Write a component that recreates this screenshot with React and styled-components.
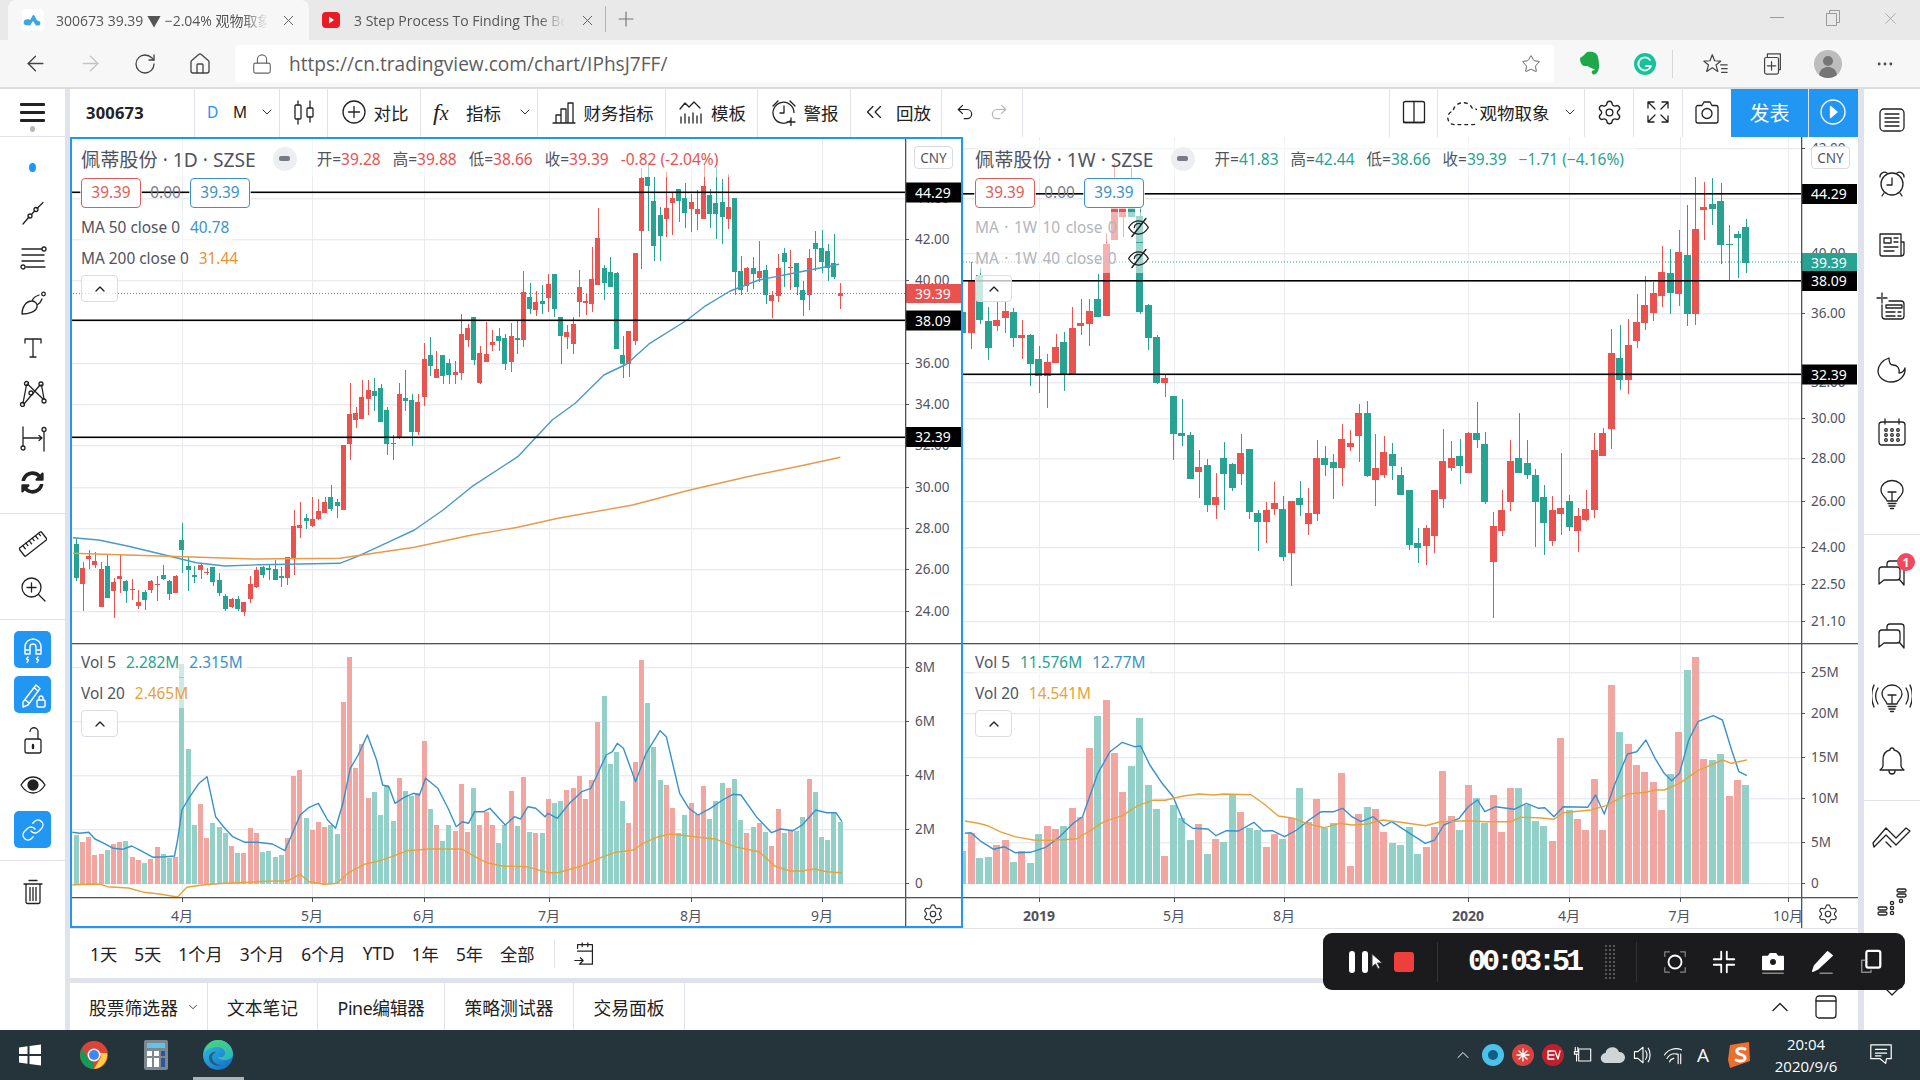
import React from 'react';
import styled, { createGlobalStyle } from 'styled-components';
import {
  ArrowLeft, ArrowRight, RotateCw, Home, Lock, Star, Plus, X, ChevronDown, ChevronUp,
  ChevronsLeft, Undo2, Redo2, Settings, Link as LinkIcon, MoreHorizontal,
} from 'lucide-react';
import { FaSyncAlt } from 'react-icons/fa';

const SANS = '"Noto Sans", "Noto Sans CJK SC", sans-serif';
const UI = '"Open Sans", "Noto Sans CJK SC", sans-serif';
const RED = '#e8524f';
const GREEN = '#28a292';
const PALE_RED = '#f2a6a2';
const PALE_GREEN = '#93d0c7';

const GlobalStyle = createGlobalStyle`
    html, body { margin: 0; padding: 0; background: #e0e3eb; }
    * { box-sizing: border-box; }
`;

// measured from the crops: [colour, body top, body bottom, wick top, wick bottom], y = base + v / 3
const left1 = [
    ['g',732,834,718,842],['r',804,852,785,933],['r',768,776,750,808],['r',784,795,755,804],['r',808,920,787,920],
    ['g',798,893,765,893],['r',846,872,835,953],['r',828,836,765,878],['g',843,872,840,908],['r',867,869,838,900],
    ['r',906,918,870,927],['g',876,899,870,930],['r',843,870,840,878],['r',852,854,828,902],['g',825,837,796,840],
    ['g',844,882,840,899],['r',828,878,826,880],['g',720,750,668,820],['g',798,809,770,872],['g',825,830,798,849],
    ['r',796,809,790,836],['r',817,819,805,826],['g',802,846,800,858],['g',840,878,820,888],['g',888,927,882,932],
    ['r',897,920,895,925],['g',897,927,888,934],['r',907,935,905,947],['r',852,896,828,908],['r',810,861,800,865],
    ['g',801,824,798,833],['g',804,809,795,840],['g',808,839,780,840],['g',828,833,800,860],['r',771,833,770,855],
    ['r',679,778,630,825],['r',675,685,606,713],['g',654,662,642,688],['r',657,678,590,680],['r',632,657,597,660],
    ['r',606,638,590,640],['g',591,627,555,633],['g',606,617,597,654],['r',435,630,435,630],['r',342,432,250,480],
    ['r',339,359,320,385],['r',291,357,241,357],['r',270,297,240,345],['g',273,288,234,333],['g',264,366,252,366],
    ['g',330,432,322,465],['g',430,431,405,480],['r',282,414,250,417],['g',294,303,210,333],['g',300,396,282,438],
    ['r',306,396,282,405],['r',177,291,128,318],['g',165,198,111,228],['r',207,234,153,234],['g',165,228,165,252],
    ['g',189,225,177,252],['r',216,225,183,252],['r',102,219,42,240],['r',84,120,72,141],['g',51,180,51,195],
    ['r',159,249,138,252],
];
const left2 = [
    ['r',583,605,486,605],['r',546,555,510,572],['g',528,543,504,573],['g',534,612,522,630],['r',528,606,488,636],
    ['g',534,540,482,582],['r',396,540,333,560],['g',411,447,368,462],['r',426,450,393,468],['g',423,432,375,462],
    ['r',372,414,342,456],['g',342,447,342,470],['g',471,528,471,612],['r',516,531,495,567],['r',492,552,471,582],
    ['r',381,426,330,472],['r',423,429,400,465],['r',357,432,261,456],['r',234,375,144,375],['g',324,369,315,420],
    ['g',336,381,291,381],['g',339,567,336,567],['g',585,612,528,654],['r',513,612,512,652],['r',279,543,278,555],
    ['r',54,213,24,327],['g',51,78,15,212],['g',123,258,52,303],['g',165,228,142,303],['r',144,177,36,231],
    ['r',114,129,96,225],['g',87,123,87,186],['g',114,159,69,204],['r',126,147,102,216],['r',147,162,90,210],
    ['r',78,177,15,177],['g',105,162,87,204],['g',129,162,20,238],['g',126,171,57,252],['r',141,177,42,207],
    ['g',114,336,114,405],['g',333,390,288,405],['r',324,378,320,395],['g',324,342,291,387],['r',333,354,243,366],
    ['g',330,405,315,432],['r',405,423,393,474],['r',324,408,282,426],['g',279,306,265,380],['r',321,323,270,390],
    ['g',309,381,309,405],['g',390,420,363,468],['r',294,405,267,450],['g',249,267,213,333],['g',264,306,210,339],
    ['g',273,324,252,363],['g',309,351,222,357],['r',400,407,369,447],
];
const right1 = [
    ['g',336,398,336,398],['r',244,398,185,447],['g',225,360,204,372],['g',363,444,320,480],['r',360,378,305,392],
    ['r',333,354,305,400],['g',336,414,324,441],['r',405,414,360,477],['g',405,492,402,558],['g',477,528,438,579],
    ['r',486,528,462,624],['r',441,489,402,489],['g',426,525,396,573],['r',384,525,321,525],['r',369,378,297,405],
    ['r',333,372,297,438],['g',297,350,222,350],['r',132,348,100,348],['r',-30,120,-111,120],['r',-20,50,-60,110],
    ['g',-20,50,-96,50],['g',48,336,20,341],['g',315,414,312,450],['g',411,549,405,552],['r',534,549,522,591],
    ['g',588,702,588,780],['g',699,708,597,738],['g',705,837,696,837],['r',801,816,750,894],['g',795,915,777,936],
    ['r',891,915,819,957],['g',774,822,726,930],['g',792,864,789,873],['r',759,822,702,855],['g',747,936,747,957],
    ['g',939,966,930,1053],['r',930,966,906,1029],['r',909,927,846,945],['g',927,1071,888,1083],['r',903,1059,903,1158],
    ['g',894,915,843,948],['r',939,972,864,1005],['r',774,942,720,963],['g',774,795,738,828],['g',786,804,762,897],
    ['r',717,804,672,858],['r',729,741,690,753],['r',639,708,612,786],['g',639,828,603,831],['r',804,840,702,918],
    ['r',756,825,708,834],['g',762,798,729,840],
];
const right2 = [
    ['g',915,975,890,975],['g',960,1125,960,1140],['g',1119,1134,1074,1179],['r',1074,1128,1065,1185],['r',960,1098,960,1149],
    ['r',873,987,777,1014],['r',864,894,813,903],['g',858,888,807,942],['r',789,909,786,909],['g',789,810,696,834],
    ['g',822,996,786,1002],['r',1068,1176,1026,1344],['r',1020,1083,960,1098],['r',873,996,810,1023],['g',864,909,729,909],
    ['g',879,915,810,927],['g',915,996,897,1131],['g',981,1059,945,1155],['r',1020,1113,978,1128],['r',1014,1032,849,1095],
    ['g',993,1071,975,1083],['r',1038,1083,1014,1146],['r',1017,1050,960,1053],['r',840,1020,789,1044],['r',789,858,774,858],
    ['r',549,777,477,837],['g',564,630,465,660],['r',525,630,447,672],['r',456,513,372,534],['r',405,459,318,480],
    ['r',369,429,336,453],['r',306,378,228,411],['g',309,369,237,432],['r',246,372,180,408],['g',255,432,105,468],
    ['r',177,432,21,465],['r',111,120,36,210],['g',102,117,24,165],['g',93,225,38,282],['g',222,224,166,330],
    ['g',192,204,183,324],['g',171,279,147,309],
];

const rebase = (rows, base) => rows.map(([c, t, b, wt, wb]) => ({
    c, t: base + t / 3, b: base + b / 3, wt: base + wt / 3, wb: base + wb / 3,
}));

const leftVol = [585,605,592,645,643,630,612,607,603,652,660,670,657,622,642,655,650,72,327,555,492,595,550,562,580,618,640,640,565,580,636,633,650,645,595,407,390,534,570,546,562,555,582,185,50,383,312,474,456,525,435,543,415,453,468,460,302,507,555,603,555,572,432,575,443,555,515,555,608,555,452,557,410,575,578,580,477,488,483,450,445,408,477,420,245,168,372,335,483,550,365,60,188,320,420,435,503,578,525,490,522,437,537,483,428,443,417,540,580,560,548,575,618,507,578,570,573,530,417,455,590,600,520,545];
const rightVol = [632,580,655,652,615,600,665,632,668,582,558,567,558,503,530,323,228,180,338,455,378,233,435,507,647,495,533,600,552,642,596,605,463,516,565,570,620,583,598,533,443,547,477,565,548,398,678,522,500,507,575,610,615,560,642,620,560,392,527,570,435,475,550,465,577,443,443,495,543,558,603,294,510,537,570,418,570,135,277,312,375,397,427,510,403,277,90,50,357,360,342,468,420,435];

const leftVolBlue = [[118,577],[130,580],[145,577],[155,597],[170,610],[185,625],[200,628],[215,618],[230,632],[250,652],[270,650],[285,648],[290,600],[297,510],[310,470],[325,430],[338,410],[345,470],[352,530],[365,560],[380,590],[400,607],[420,607],[445,612],[465,632],[475,590],[490,525],[505,502],[520,490],[535,540],[548,565],[560,490],[572,385],[585,345],[600,285],[615,360],[625,435],[635,440],[645,490],[660,472],[675,460],[685,465],[695,415],[715,445],[733,510],[745,560],[755,545],[765,550],[775,515],[790,515],[800,505],[825,555],[840,530],[850,537],[862,500],[875,505],[890,530],[895,520],[910,535],[930,490],[950,455],[965,445],[975,405],[990,345],[1000,335],[1008,310],[1018,325],[1038,425],[1055,340],[1078,272],[1088,290],[1110,460],[1125,505],[1140,525],[1160,505],[1180,480],[1197,463],[1210,465],[1235,530],[1260,578],[1275,567],[1295,572],[1310,555],[1332,510],[1350,518],[1365,518],[1375,545]];
const leftVolOrange = [[118,735],[145,732],[165,733],[175,740],[210,744],[235,757],[260,762],[290,771],[305,742],[330,735],[365,730],[410,727],[430,724],[470,722],[490,703],[505,725],[530,733],[550,730],[570,697],[595,673],[620,662],[640,650],[665,632],[700,627],[755,627],[775,650],[795,668],[820,678],[860,680],[895,698],[910,698],[950,678],[985,650],[1005,637],[1035,630],[1050,610],[1075,590],[1095,582],[1135,590],[1170,598],[1200,620],[1240,635],[1265,678],[1290,693],[1310,693],[1330,687],[1350,695],[1375,698]];
const rightVolBlue = [[8,580],[18,578],[35,605],[55,628],[72,620],[90,638],[115,637],[140,622],[160,595],[185,550],[200,530],[225,400],[245,335],[265,307],[285,320],[295,318],[310,375],[330,430],[348,470],[365,545],[380,565],[405,567],[418,587],[435,572],[455,573],[480,547],[495,573],[510,572],[530,590],[550,570],[570,540],[590,515],[610,515],[625,505],[640,530],[655,545],[675,530],[692,558],[705,545],[730,575],[760,610],[775,600],[790,555],[815,535],[830,500],[845,480],[857,515],[875,500],[905,508],[925,490],[945,505],[955,503],[970,530],[985,500],[1025,502],[1038,465],[1052,522],[1070,430],[1090,342],[1105,335],[1120,300],[1135,355],[1150,400],[1162,422],[1175,400],[1190,300],[1205,245],[1230,227],[1245,240],[1260,330],[1272,395],[1285,407]];
const rightVolOrange = [[8,543],[30,550],[45,557],[65,575],[90,590],[120,600],[150,601],[190,597],[210,575],[235,545],[265,527],[290,497],[315,481],[335,481],[365,468],[390,462],[415,465],[430,462],[475,464],[495,490],[520,528],[545,535],[570,553],[595,563],[620,550],[640,555],[665,552],[690,540],[720,547],[760,557],[785,545],[830,542],[860,545],[900,545],[915,532],[945,533],[970,538],[985,518],[1030,510],[1055,497],[1090,462],[1120,457],[1135,450],[1150,450],[1175,430],[1205,392],[1245,360],[1260,370],[1285,360]];
const ma50 = [[5,1193],[50,1200],[100,1218],[160,1243],[220,1268],[270,1278],[330,1274],[400,1272],[470,1270],[500,1250],[550,1210],[600,1170],[650,1110],[700,1040],[780,950],[840,840],[880,790],[930,705],[970,672],[1010,610],[1075,540],[1105,500],[1150,453],[1200,420],[1260,400],[1340,373]];
const ma200 = [[5,1240],[100,1245],[200,1250],[320,1257],[470,1255],[600,1222],[700,1185],[780,1162],[850,1135],[980,1095],[1080,1050],[1180,1010],[1280,975],[1342,952]];

const volPts = (pts, ox) => pts.map(([x, y]) => `${(ox + x / 1.633).toFixed(1)},${(640 + y / 3).toFixed(1)}`).join(' ');
const maPts = (pts) => pts.map(([x, y]) => `${(70 + x / 1.742).toFixed(1)},${(140 + y / 3).toFixed(1)}`).join(' ');

const leftChart = {
    x: 70, w: 893, axis: 905, x0: 76.3, step: 6.21, bodyW: 5, barW: 5, volBase: 884,
    candles: [...rebase(left1, 300), ...rebase(left2, 160)],
    vols: leftVol, volFlip: { 123: 'g' },
    prices: [[198,'44.00'],[239,'42.00'],[280,'40.00'],[363,'36.00'],[404,'34.00'],[445,'32.00'],[487,'30.00'],[528,'28.00'],[569,'26.00'],[611,'24.00']],
    volLabels: [[667,'8M'],[721,'6M'],[775,'4M'],[829,'2M'],[883,'0']],
    times: [[182,'4月'],[312,'5月'],[424,'6月'],[549,'7月'],[691,'8月'],[822,'9月']],
    tags: [[192.5,'44.29'],[320.5,'38.09'],[437,'32.39']],
    levels: [192.5, 320.5, 437.5],
    last: { y: 293.5, tagTop: 284, color: RED },
    lines: [[maPts(ma50), '#4a9ac6'], [maPts(ma200), '#e8994a'], [volPts(leftVolBlue, 0), '#3691cf'], [volPts(leftVolOrange, 0), '#e6a33c']],
};

const rightChart = {
    x: 963, w: 895, axis: 1801, x0: 962.9, step: 8.42, bodyW: 7, barW: 7, volBase: 884,
    candles: [...rebase(right1, 200), ...rebase(right2, 170)],
    vols: rightVol, volFlip: { 91: 'r', 92: 'r' },
    prices: [[148,'42.00'],[198,'44.00'],[253,'40.00'],[313,'36.00'],[382,'32.00'],[418,'30.00'],[458,'28.00'],[501,'26.00'],[547,'24.00'],[584,'22.50'],[621,'21.10']],
    volLabels: [[672,'25M'],[713,'20M'],[757,'15M'],[798,'10M'],[842,'5M'],[883,'0']],
    times: [[1039,'2019',true],[1174,'5月'],[1284,'8月'],[1468,'2020',true],[1569,'4月'],[1679.5,'7月'],[1788,'10月']],
    tags: [[194,'44.29'],[281,'38.09'],[374.5,'32.39']],
    levels: [194, 281, 374.5],
    last: { y: 262, tagTop: 253, color: GREEN },
    lines: [[volPts(rightVolBlue, 960), '#3691cf'], [volPts(rightVolOrange, 960), '#e6a33c']],
};

/* ---------- layout ---------- */

const Page = styled.div`
    position: relative;
    width: 1920px;
    height: 1080px;
    overflow: hidden;
    display: flex;
    flex-direction: column;
    font-family: ${SANS};
    color: #131722;
`;

const TabStrip = styled.div`
    height: 40px;
    background: #e9e9e9;
    padding: 0 0 0 8px;
    display: flex;
    align-items: stretch;
    font-family: ${UI};
`;

const Tab = styled.div`
    width: ${(p) => p.$w}px;
    background: ${(p) => (p.$on ? '#f7f7f7' : 'transparent')};
    border-radius: 8px 8px 0 0;
    padding: 0 ${(p) => p.$pr}px 0 ${(p) => p.$pad}px;
    display: flex;
    align-items: center;
    gap: ${(p) => p.$gap}px;
`;

const TabTitle = styled.div`
    flex: 1;
    white-space: nowrap;
    overflow: hidden;
    font-size: 14px;
    color: #555;
    -webkit-mask-image: linear-gradient(90deg, #000 88%, transparent);
    mask-image: linear-gradient(90deg, #000 88%, transparent);
`;

const NewTab = styled.div`
    display: flex;
    align-items: center;
    margin-top: 6px;
    height: 26px;
    padding-left: 8px;
    border-left: 1px solid #b5b5b5;
    color: #777;
`;

const WindowControls = styled.div`
    margin-left: auto;
    width: 177px;
    display: flex;
    align-items: center;
    justify-content: space-between;
    padding: 0 20px 4px 27px;
    color: #9a9a9a;
`;

const AddressRow = styled.div`
    height: 49px;
    background: #f7f7f7;
    border-bottom: 2px solid #dcdcdc;
    display: flex;
    align-items: center;
    padding-left: 23px;
    color: #444;
`;

const NavButton = styled.div`
    width: 55px;
    display: flex;
    color: ${(p) => p.$color || 'inherit'};
`;

const AddressBar = styled.div`
    width: 1319px;
    height: 38px;
    margin-left: -8px;
    background: #fff;
    border-radius: 4px;
    display: flex;
    align-items: center;
    padding: 0 13px 0 16px;
    color: #666;
`;

const Url = styled.div`
    flex: 1;
    margin-left: 16px;
    font-family: ${UI};
    font-size: 19.1px;
    color: #5d5d5d;
    white-space: nowrap;
`;

const ExtRow = styled.div`
    flex: 1;
    display: flex;
    align-items: center;
    padding-left: 8px;
`;

const Ext = styled.div`
    width: ${(p) => p.$w || 55}px;
    display: flex;
    align-items: center;
    justify-content: center;
    flex: none;
`;

const VRule = styled.div`
    width: 1px;
    height: 28px;
    margin-right: 7px;
    background: #d8d8d8;
    flex: none;
`;

const Workspace = styled.div`
    flex: 1;
    min-height: 0;
    display: flex;
    background: #e0e3eb;
`;

const LeftRail = styled.div`
    width: 65px;
    background: #fff;
    display: flex;
    flex-direction: column;
    margin-right: 5px;
    color: #222;
`;

const RailHead = styled.div`
    position: relative;
    height: 48px;
    flex: none;
    border-bottom: 1px solid #e0e3eb;
    display: flex;
    align-items: center;
    justify-content: center;
    &::after {
        content: '';
        position: absolute;
        left: 30px;
        bottom: 4px;
        width: 5px;
        height: 6px;
        border-radius: 50%;
        background: #b4b7bf;
    }
`;

const RailGroup = styled.div`
    padding: 8px 0;
    border-bottom: ${(p) => (p.$last ? 'none' : '1px solid #e0e3eb')};
    margin-bottom: ${(p) => (p.$last ? 0 : -1)}px;
`;

const RailItem = styled.div`
    height: 45px;
    display: flex;
    align-items: center;
    justify-content: center;
`;

const ToolDot = styled.span`
    width: 7px;
    height: 9px;
    border-radius: 50%;
    background: #2196f3;
`;

const RailToggle = styled.div`
    width: 37px;
    height: 37px;
    border-radius: 5px;
    background: #2196f3;
    color: #fff;
    display: flex;
    align-items: center;
    justify-content: center;
`;

const Center = styled.div`
    width: 1788px;
    display: flex;
    flex-direction: column;
`;

const TopBar = styled.div`
    height: 48px;
    background: #fff;
    display: flex;
    align-items: stretch;
    flex: none;
    color: #222;
`;

const Seg = styled.div`
    width: ${(p) => p.$w}px;
    flex: none;
    border-right: 1px solid ${(p) => (p.$plain ? 'transparent' : '#e0e3eb')};
    display: flex;
    align-items: center;
    justify-content: ${(p) => (p.$start ? 'flex-start' : 'center')};
    padding: 0 0 2px ${(p) => p.$pad || 0}px;
    gap: ${(p) => (p.$gap === undefined ? 6 : p.$gap)}px;
    font-size: ${(p) => p.$size || 17.5}px;
    color: ${(p) => p.$color || 'inherit'};
    background: ${(p) => p.$bg || 'transparent'};
    white-space: nowrap;
`;

const Caret = styled(ChevronDown)`
    flex: none;
    margin-left: ${(p) => p.$m || 0}px;
`;

const Symbol = styled.span`
    font-size: 16.5px;
    font-weight: 700;
    letter-spacing: .2px;
`;

const Interval = styled.span`
    font-size: 15.5px;
    width: 26px;
    color: ${(p) => (p.$on ? '#2196f3' : '#222')};
`;

const Fx = styled.span`
    font-family: "Liberation Serif", serif;
    font-style: italic;
    font-size: 24px;
    width: 24px;
`;

const Charts = styled.div`
    height: 792px;
    flex: none;
    display: flex;
    background: #fff;
`;

const Pane = styled.div`
    position: relative;
    width: ${(p) => p.$w}px;
    height: 792px;
    flex: none;
    overflow: hidden;
    border-bottom: 1px solid #e0e3eb;
    &::after {
        content: '';
        display: ${(p) => (p.$active ? 'block' : 'none')};
        position: absolute;
        inset: 0;
        border: 2px solid #2196f3;
        pointer-events: none;
    }
`;

const ChartSvg = styled.svg`
    display: block;
    position: absolute;
    left: 0;
    top: 0;
`;

const AxisText = styled.text`
    font-family: ${SANS};
    font-size: 13.5px;
    fill: #50535e;
`;

const TagText = styled.text`
    font-family: ${SANS};
    font-size: 14px;
    fill: #fff;
`;

const TimeText = styled.text`
    font-family: ${SANS};
    font-size: 14px;
    fill: #50535e;
    text-anchor: middle;
    font-weight: ${(p) => (p.$strong ? 700 : 400)};
`;

const Legend = styled.div`
    position: absolute;
    left: ${(p) => p.$left}px;
    top: ${(p) => p.$top}px;
    display: flex;
    flex-direction: column;
    align-items: flex-start;
`;

const TitleRow = styled.div`
    height: 37px;
    display: flex;
    align-items: center;
    background: rgba(255, 255, 255, .55);
    font-size: 15.5px;
    white-space: nowrap;
`;

const Title = styled.span`
    font-size: 19.2px;
    color: #50535e;
`;

const HidePill = styled.span`
    width: 24px;
    height: 24px;
    margin: 0 20px 0 17px;
    border-radius: 50%;
    background: #eceef2;
    display: flex;
    align-items: center;
    justify-content: center;
    &::before {
        content: '';
        width: 11px;
        height: 5px;
        border-radius: 2px;
        background: #787b86;
    }
`;

const Ohlc = styled.span`
    color: #50535e;
    margin-right: 12px;
    b {
        font-weight: 400;
        color: ${(p) => p.$color};
    }
`;

const ValuesRow = styled.div`
    height: 31px;
    margin-bottom: 4px;
    display: flex;
    align-items: center;
    font-size: 15.4px;
    color: #787b86;
`;

const PriceBox = styled.span`
    width: 60px;
    height: 30px;
    background: #fff;
    border: 1px solid ${(p) => p.$color};
    border-radius: 4px;
    color: ${(p) => p.$color};
    display: flex;
    align-items: center;
    justify-content: center;
    box-shadow: 0 0 0 1px rgba(255, 255, 255, .7);
`;

const Spread = styled.span`
    width: 49px;
    text-align: center;
`;

const LegendRow = styled.div`
    height: 30px;
    margin-bottom: 1px;
    min-width: ${(p) => (p.$muted ? 165 : 0)}px;
    display: flex;
    align-items: center;
    gap: 10px;
    padding-right: ${(p) => (p.$muted ? 0 : 4)}px;
    background: rgba(255, 255, 255, .55);
    font-size: 15.4px;
    word-spacing: ${(p) => (p.$muted ? 1.5 : 0)}px;
    white-space: nowrap;
    color: ${(p) => (p.$muted ? '#b2b5be' : '#50535e')};
`;

const LegendValue = styled.span`
    color: ${(p) => p.$color};
`;

const EyeOff = styled.span`
    margin-left: auto;
    color: #222;
    display: flex;
`;

const CollapseBtn = styled.div`
    width: 37px;
    height: 27px;
    margin-top: 1px;
    border: 1px solid #dadde4;
    border-radius: 4px;
    background: rgba(255, 255, 255, .75);
    display: flex;
    align-items: center;
    justify-content: center;
    color: #222;
`;

const CnyBox = styled.div`
    position: absolute;
    top: 9px;
    left: ${(p) => p.$left}px;
    width: 39px;
    height: 23px;
    border: 1px solid #d9dbe2;
    border-radius: 4px;
    background: #fff;
    font-size: 13.5px;
    color: #50535e;
    display: flex;
    align-items: center;
    justify-content: center;
`;

const AxisGear = styled.div`
    position: absolute;
    top: 766px;
    left: ${(p) => p.$left}px;
    display: flex;
    color: #333;
`;

const RangeBar = styled.div`
    height: 49px;
    flex: none;
    background: #fff;
    display: flex;
    align-items: center;
    padding-left: 20px;
    gap: 17px;
    font-size: 17.3px;
    color: #222;
`;

const RangeSep = styled.div`
    width: 1px;
    height: 28px;
    margin-left: 2px;
    background: #e0e3eb;
`;

const BottomBar = styled.div`
    height: 47px;
    margin-top: 5px;
    flex: none;
    background: #fff;
    display: flex;
    align-items: stretch;
    font-size: 17.8px;
    color: #222;
`;

const BottomTab = styled.div`
    width: ${(p) => p.$w}px;
    flex: none;
    display: flex;
    align-items: center;
    justify-content: ${(p) => (p.$start ? 'flex-start' : 'center')};
    padding-left: ${(p) => (p.$start ? 19 : 0)}px;
    border-right: 1px solid #e0e3eb;
    white-space: nowrap;
    gap: 8px;
    letter-spacing: ${(p) => p.$ls || 0}px;
`;

const BottomTools = styled.div`
    margin-left: auto;
    margin-right: 21px;
    display: flex;
    align-items: center;
    gap: 21px;
`;

const RightRail = styled.div`
    width: 56px;
    margin-left: 6px;
    background: #fff;
    display: flex;
    flex-direction: column;
    align-items: stretch;
    overflow: hidden;
    color: #222;
`;

const RightItem = styled.div`
    position: relative;
    height: ${(p) => p.$h || 62.5}px;
    flex: none;
    display: flex;
    align-items: center;
    justify-content: center;
`;

const RightSep = styled.div`
    height: 1px;
    flex: none;
    margin: ${(p) => p.$m};
    background: #e0e3eb;
`;

const Badge = styled.span`
    position: absolute;
    top: 11px;
    right: 5px;
    width: 18px;
    height: 18px;
    border-radius: 50%;
    background: #f2495e;
    color: #fff;
    font-size: 12px;
    font-weight: 700;
    display: flex;
    align-items: center;
    justify-content: center;
`;

const Taskbar = styled.div`
    height: 50px;
    flex: none;
    background: #25333a;
    display: flex;
    align-items: center;
    color: #fff;
    font-family: ${UI};
`;

const TaskIcon = styled.div`
    position: relative;
    width: ${(p) => p.$w}px;
    height: 50px;
    flex: none;
    display: flex;
    align-items: center;
    justify-content: center;
    &::after {
        content: '';
        display: ${(p) => (p.$open ? 'block' : 'none')};
        position: absolute;
        left: 10px;
        right: 9px;
        bottom: 0;
        height: 3px;
        background: #a9b4b9;
    }
`;

const Tray = styled.div`
    margin-left: auto;
    display: flex;
    align-items: center;
    height: 100%;
`;

const TrayItem = styled.div`
    width: 30px;
    margin-left: ${(p) => p.$m || 0}px;
    display: flex;
    justify-content: center;
    font-size: 19px;
`;

const Clock = styled.div`
    width: 104px;
    text-align: center;
    font-size: 15px;
    line-height: 22px;
`;

const Notify = styled.div`
    width: 46px;
    margin-right: 16px;
    display: flex;
    justify-content: center;
`;

const Recorder = styled.div`
    position: absolute;
    left: 1323px;
    top: 933px;
    width: 582px;
    height: 57px;
    border-radius: 9px;
    background: #1b1b1d;
    color: #fff;
    display: flex;
    align-items: center;
`;

const RecSide = styled.div`
    width: 115px;
    height: 40px;
    flex: none;
    border-right: 1px solid #333;
    display: flex;
    align-items: center;
    padding-left: 26px;
    gap: 7px;
`;

const PauseBar = styled.span`
    width: 6px;
    height: 22px;
    border-radius: 3px;
    background: #fff;
`;

const RecStop = styled.span`
    width: 20px;
    height: 20px;
    margin-left: 2px;
    border-radius: 3px;
    background: #ee3f3c;
`;

const RecTime = styled.div`
    width: 199px;
    height: 40px;
    flex: none;
    border-right: 1px solid #333;
    display: flex;
    align-items: center;
    padding-left: 30px;
    font-family: "Liberation Mono", monospace;
    font-weight: 700;
    font-size: 30px;
    letter-spacing: -4px;
`;

const Grip = styled.span`
    width: 12px;
    height: 36px;
    margin-left: 24px;
    background-image: radial-gradient(#555 1px, transparent 1.3px);
    background-size: 4px 4px;
`;

const RecTools = styled.div`
    flex: 1;
    display: flex;
    align-items: center;
    justify-content: space-around;
    padding: 0 10px 0 14px;
`;

/* ---------- drawings ---------- */

const Svg = styled.svg`
    display: block;
    flex: none;
    fill: none;
    stroke: currentColor;
    stroke-width: ${(p) => p.$sw === undefined ? 1.3 : p.$sw};
    stroke-linecap: round;
    stroke-linejoin: round;
    margin-left: ${(p) => p.$ml || 0}px;
`;

const Ic = ({ s = 28, vb = 28, sw, children }) => (
    <Svg width={s} height={s} viewBox={`0 0 ${vb} ${vb}`} $sw={sw}>{children}</Svg>
);

const Trend = () => (
    <Ic><path d="M4 25l6-7M12.5 15.5l3-3.5M18 9.500l6-6" /><circle cx="11" cy="17" r="2" /><circle cx="17" cy="10.500" r="2" /></Ic>
);
const FibLines = () => (
    <Ic><path d="M3 5h20M3 11h22M3 17h22M7 23h19" /><circle cx="25" cy="5" r="2" /><circle cx="4" cy="23" r="2" /></Ic>
);
const Brush = () => (
    <Ic><path d="M3 25c0-7 4-13 10-13 3 0 6 3 5 6-1 5-9 7-15 7zM13 12c1-3 4-5 7-6M18 16c2-1 4-3 5-6" /><circle cx="24.500" cy="5" r="1.800" /></Ic>
);
const TextTool = () => (
    <Ic><path d="M6 9V5h16v4M14 5v18M11 23h6" /></Ic>
);
const Pattern = () => (
    <Ic><path d="M4 24L7.500 6M8.500 5L24 20M5 25L21 6M22.500 6L25 20" /><circle cx="7.500" cy="4.500" r="2" /><circle cx="22" cy="5" r="2" /><circle cx="25" cy="22" r="2" /><circle cx="3.500" cy="25.500" r="2" /><circle cx="12" cy="14" r="2" /></Ic>
);
const Measure = () => (
    <Ic><path d="M4 3v19M4 14h19M20 11.500l3 2.500-3 2.500M25 8v19" /><circle cx="4" cy="24" r="2" /><circle cx="25" cy="5.500" r="2" /></Ic>
);
const Ruler = () => (
    <Ic><g transform="rotate(-38 14 14)"><rect x="0" y="9" width="28" height="10" rx="1" /><path d="M5 9v4M9 9v3M13 9v4M17 9v3M21 9v4M25 9v3" /></g></Ic>
);
const ZoomTool = () => (
    <Ic><circle cx="12.500" cy="12.500" r="9.500" /><path d="M19.500 19.500L26 26M12.500 8v9M8 12.500h9" /></Ic>
);
const Magnet = () => (
    <Ic sw={1.4}><path d="M6 18V11a8 8 0 0 1 16 0v7h-5v-7a3 3 0 0 0-6 0v7zM6 14h5M17 14h5M9 21l-1.500 2 2 1-1.500 2.500M19 21l-1.500 2 2 1-1.500 2.500" /></Ic>
);
const PencilLock = () => (
    <Ic sw={1.4}><path d="M4 21L17 4l4 3.500L9 24l-5 2zM15 6.500l4 3.500M6 18.500l4 3.500" /><rect x="18" y="19" width="8" height="7" rx="1" /><path d="M20 19v-2a2 2 0 0 1 4 0v2" /></Ic>
);
const Unlock = () => (
    <Ic><rect x="6" y="13" width="16" height="14" rx="2" /><path d="M19 13V6a4 4 0 0 0-8-.500" /><path d="M14 19v3" strokeWidth="2.400" /></Ic>
);
const Eye = () => (
    <Ic><path d="M2 14c3-5 7-8 12-8s9 3 12 8c-3 5-7 8-12 8s-9-3-12-8z" /><circle cx="14" cy="14" r="5" fill="currentColor" /></Ic>
);
const Trash = () => (
    <Ic><path d="M7 7h14v18a1.500 1.500 0 0 1-1.500 1.500h-11A1.500 1.500 0 0 1 7 25zM5 7h18M10 3.500h8M11 10.500v13M14 10.500v13M17 10.500v13" /></Ic>
);
const CandleIc = () => (
    <Ic><rect x="5" y="7" width="6" height="14" rx="1" /><rect x="17" y="10" width="6" height="9" rx="1" /><path d="M8 3v4M8 21v5M20 3v7M20 19v5" /></Ic>
);
const PlusCircle = () => (
    <Ic><circle cx="14" cy="14" r="11" /><path d="M14 8.500v11M8.500 14h11" /></Ic>
);
const BarsIc = () => (
    <Ic><path d="M3 25h22M6 25v-8h5v8M11 25V11h5v14M18 25V5h5v20" /></Ic>
);
const TemplateIc = () => (
    <Ic><path d="M3 11l5-6 4 4 5-5 6 6M4 25v-6M8 25v-9M12 25v-6M16 25v-10M20 25v-7M24 25v-9" /></Ic>
);
const AlarmPlus = () => (
    <Ic><path d="M20 23a10.500 10.500 0 1 1 4-8.500M14 8v7h-4M3 8l5-5M20 3l5 5M21 20v8M17 24h8" /></Ic>
);
const SplitIc = () => (
    <Ic><rect x="3.500" y="3.500" width="21" height="21" rx="2" /><path d="M14 3.500v21M3.500 24.500h21" /></Ic>
);
const CloudIc = () => (
    <Ic s={32} sw={1.2}><path strokeDasharray="2.500 3.500" d="M8 25a6 6 0 0 1-1-11.800A9 9 0 0 1 24 11a7 7 0 0 1 1 14z" /></Ic>
);
const FullIc = () => (
    <Ic><path d="M4 4l7 7M4 10V4h6M24 4l-7 7M24 10V4h-6M4 24l7-7M4 18v6h6M24 24l-7-7M24 18v6h-6" /></Ic>
);
const CameraIc = () => (
    <Ic><path d="M3 9.500a2 2 0 0 1 2-2h4l2-3.500h6l2 3.500h4a2 2 0 0 1 2 2V23a2 2 0 0 1-2 2H5a2 2 0 0 1-2-2z" /><circle cx="14" cy="15.500" r="5" /></Ic>
);
const PlayCircle = () => (
    <Ic><circle cx="14" cy="14" r="12" /><path d="M11.500 8.500l6.500 5.500-6.500 5.500z" fill="currentColor" /></Ic>
);
const EyeSlash = () => (
    <Ic s={23} sw={1.6}><path d="M2 14c3-5 7-8 12-8s9 3 12 8c-3 5-7 8-12 8s-9-3-12-8z" /><path d="M23 3L6 25" strokeWidth="1.800" /><path d="M9 14a5 5 0 0 1 8-4" /></Ic>
);

// right rail
const WatchIc = () => (
    <Ic s={32} vb={32}><rect x="4" y="5" width="24" height="22" rx="4" /><path d="M9 10h14M9 14h14M9 18h14M9 22h14" /></Ic>
);
const AlarmIc = () => (
    <Ic s={32} vb={32}><circle cx="16" cy="17" r="11" /><path d="M4 10a4.500 4.500 0 0 1 7-4M28 10a4.500 4.500 0 0 0-7-4M16 11v7h-5M8 26l-2 3M24 26l2 3" /></Ic>
);
const NewsIc = () => (
    <Ic s={32} vb={32}><path d="M25 27H6a2 2 0 0 1-2-2V5h21v22a3 3 0 0 0 3-3V13h-3" /><rect x="8" y="9" width="7" height="5" /><path d="M18 9h4M18 13h4M8 18h14M8 22h10" /></Ic>
);
const HotlistIc = () => (
    <Ic s={32} vb={32}><path d="M6 13v11a3 3 0 0 0 3 3h16a3 3 0 0 0 3-3V12a3 3 0 0 0-3-3H13M10 13h16v3H10zM10 20h9M22 20h3M10 24h9M22 24h3M1 6h4M7 6h4M6 1v4M6 7v4" /></Ic>
);
const FlameIc = () => (
    <Ic s={32} vb={32}><path d="M13 4c-7 2-11 8-11 13 0 6 6 11 13 11 8 0 15-6 14-14-1 3-3 5-6 5 1-5-2-8-6-8-3 0-4-3-4-7z" /></Ic>
);
const CalendarIc = () => (
    <Ic s={32} vb={32}><rect x="3" y="5" width="26" height="23" rx="3" /><path d="M9 2v5M23 2v5" /><circle cx="10" cy="13" r="1.300" /><circle cx="16" cy="13" r="1.300" /><circle cx="22" cy="13" r="1.300" /><circle cx="10" cy="18" r="1.300" /><circle cx="16" cy="18" r="1.300" /><circle cx="22" cy="18" r="1.300" /><circle cx="10" cy="23" r="1.300" /><circle cx="16" cy="23" r="1.300" /><circle cx="22" cy="23" r="1.300" /></Ic>
);
const BulbIc = () => (
    <Ic s={32} vb={32}><path d="M11 22c0-3-6-5-6-11a11 9.500 0 0 1 22 0c0 6-6 8-6 11zM12 24.500h8M13 27h6M14.500 29.500h3M16 22v-9M12 13h8" /></Ic>
);
const ChatPair = () => (
    <Ic s={32} vb={32}><path d="M3 27V13a3 3 0 0 1 3-3h15a3 3 0 0 1 3 3v7a3 3 0 0 1-3 3H8zM11 10V7a3 3 0 0 1 3-3h11a3 3 0 0 1 3 3v21l-4-5" /></Ic>
);
const WaveBulb = () => (
    <Svg width="40" height="32" viewBox="0 0 40 32"><path d="M15 22c0-3-5-5-5-10a10 9 0 0 1 20 0c0 5-5 7-5 10zM16 24.500h8M17 27h6M18.500 29.500h3M20 22v-9M16 13h8M6 6c-3 5-3 11 0 16M2 3c-3 7-3 15 0 22M34 6c3 5 3 11 0 16M38 3c3 7 3 15 0 22" /></Svg>
);
const BellIc = () => (
    <Ic s={32} vb={32}><path d="M16 3c-1.500 0-2 1-2 2-5 1-7 5-7 10v6c0 2-2 3-3 4h24c-1-1-3-2-3-4v-6c0-5-2-9-7-10 0-1-.5-2-2-2zM13 25v1a3 3 0 0 0 6 0v-1" /></Ic>
);
const ZigZag = () => (
    <Svg width="40" height="26" viewBox="0 0 40 26"><path d="M2 21L14 9l10 10 14-14-4-3-10 10-10-10L1 17zM14 16l5 5" /></Svg>
);
const DotsPills = () => (
    <Ic s={32} vb={32}><rect x="2" y="22" width="9" height="3" rx="1.500" /><rect x="2" y="27" width="9" height="3" rx="1.500" /><circle cx="16" cy="18" r="1.600" /><circle cx="16" cy="23" r="1.600" /><circle cx="16" cy="28" r="1.600" /><rect x="21" y="4" width="9" height="3" rx="1.500" /><rect x="21" y="9" width="9" height="3" rx="1.500" /><circle cx="25" cy="16" r="1.600" /></Ic>
);
const DownChevrons = () => (
    <Svg width="36" height="36" viewBox="0 0 36 36"><path d="M6 8l12 12L30 8M6 16l12 12 12-12" /></Svg>
);

// browser and taskbar logos
const TvFavicon = () => (
    <Svg width="22" height="22" viewBox="0 0 22 22" $sw={0}>
        <rect width="22" height="22" rx="4" fill="#fff" />
        <path fill="#3ea5e8" d="M3 16a3 3 0 0 1 1-5.500l2-.5 2 1 3-5c1 0 1.500.5 2 1.500l2 4 2 .5a2.500 2.500 0 0 1 0 4.500h-3l-3-4.500-3 4.500z" />
    </Svg>
);
const YtFavicon = () => (
    <Svg width="18" height="18" viewBox="0 0 18 18" $sw={0}>
        <rect x="0" y="1" width="18" height="16" rx="4" fill="#e91c24" /><path fill="#fff" d="M7 5.500l5 3.500-5 3.500z" />
    </Svg>
);
const Evernote = () => (
    <Svg width="22" height="26" viewBox="0 0 22 26" $sw={0}>
        <path fill="#1ea84a" d="M4 5l4-4c5-1 10 0 11 5 1 6 2 10 0 14-1 3-5 5-6 2-1-2 1-3 3-3-2-2-6-2-7-4H5C2 14 1 10 1 7z" />
    </Svg>
);
const Grammarly = () => (
    <Svg width="24" height="24" viewBox="0 0 24 24" $sw={0}>
        <circle cx="12" cy="12" r="11" fill="#15c39a" />
        <path fill="none" stroke="#fff" strokeWidth="1.800" d="M17 8a6.500 6.500 0 1 0 1 6h-5" />
    </Svg>
);
const Avatar = () => (
    <Svg width="28" height="28" viewBox="0 0 28 28" $sw={0}>
        <circle cx="14" cy="14" r="14" fill="#bdbdbd" /><circle cx="14" cy="11" r="5" fill="#757575" /><path fill="#757575" d="M5 25c1-6 5-8 9-8s8 2 9 8c-5 4-13 4-18 0z" />
    </Svg>
);
const FavList = () => (
    <Ic s={26}><path d="M10 4l2.500 6.500L19 11l-5 4 2 7-6-4-6 4 2-7-5-4 6.500-.500zM19 15h7M20 19h6M20 23h6" /></Ic>
);
const Collections = () => (
    <Ic s={26}><rect x="6" y="7" width="15" height="18" rx="2" /><path d="M9 7V3h14v17h-2M13.500 11.500v9M9 16h9" /></Ic>
);
const WinLogo = () => (
    <Svg width="22" height="22" viewBox="0 0 22 22" $sw={0}>
        <path fill="#fff" d="M0 3.500l8.500-1.300V10H0zM10.500 2L22 .5V10H10.500zM0 12h8.500v7.800L0 18.500zM10.500 12H22v9.500L10.500 20z" />
    </Svg>
);
const ChromeLogo = () => (
    <Svg width="28" height="28" viewBox="0 0 28 28" $sw={0}>
        <circle cx="14" cy="14" r="14" fill="#db4437" />
        <path fill="#0f9d58" d="M14 28A14 14 0 0 1 2 7l7 12 5 2z" />
        <path fill="#ffcd40" d="M14 28L21 16l-1-4h7A14 14 0 0 1 14 28z" />
        <circle cx="14" cy="14" r="6.500" fill="#fff" /><circle cx="14" cy="14" r="5" fill="#4285f4" />
    </Svg>
);
const CalcLogo = () => (
    <Svg width="24" height="30" viewBox="0 0 24 30" $sw={0}>
        <rect width="24" height="30" rx="2" fill="#7b8891" /><rect x="3" y="3" width="18" height="5" fill="#5fc4e8" />
        <rect x="3" y="11" width="5" height="5" fill="#fff" /><rect x="10" y="11" width="5" height="5" fill="#fff" /><rect x="17" y="11" width="4" height="5" fill="#2b579a" />
        <rect x="3" y="18" width="5" height="9" fill="#fff" /><rect x="10" y="18" width="5" height="9" fill="#fff" /><rect x="17" y="18" width="4" height="9" fill="#2b579a" />
    </Svg>
);
const EdgeLogo = () => (
    <Svg width="30" height="30" viewBox="0 0 30 30" $sw={0}>
        <defs>
            <linearGradient id="edgeA" x1="0" y1="0" x2="1" y2="1"><stop offset="0" stopColor="#2ec4e8" /><stop offset="1" stopColor="#1565c0" /></linearGradient>
            <linearGradient id="edgeB" x1="0" y1="0" x2="1" y2="1"><stop offset="0" stopColor="#53d769" /><stop offset="1" stopColor="#27b5c8" /></linearGradient>
        </defs>
        <circle cx="15" cy="15" r="15" fill="url(#edgeA)" />
        <path fill="url(#edgeB)" d="M15 0c9 0 15 7 15 14 0 4-4 6-8 6-5 0-7-2-7-3 5 1 7-1 7-4 0-4-4-6-8-6C8 7 3 10 1 13 2 6 8 0 15 0z" />
        <path fill="#25333a" d="M9 17c0 5 5 8 9 8-6 2-12-2-12-7 0-4 4-7 7-6-2 1-4 3-4 5z" opacity=".55" />
    </Svg>
);
const SogouLogo = () => (
    <Svg width="24" height="26" viewBox="0 0 24 26" $sw={0}>
        <path fill="#ee6f2d" d="M3 3l19-3 1 19-20 7-2-8z" />
        <path fill="none" stroke="#fff" strokeWidth="3" d="M18 7c-5-2-9 0-8 3 1 3 8 2 8 6 0 3-5 4-9 2" />
    </Svg>
);
const RecDot = ({ fill, children }) => (
    <Svg width="24" height="24" viewBox="0 0 24 24" $sw={0}>
        <circle cx="12" cy="12" r="11" fill={fill} />{children}
    </Svg>
);

/* ---------- chart ---------- */

function ChartDrawing({ cfg }) {
    const top = 137;
    const right = cfg.x + cfg.w;
    const gridColor = '#e9ebf0';
    return (
        <ChartSvg width={cfg.w} height="792" viewBox={`${cfg.x} ${top} ${cfg.w} 792`}>
            {cfg.times.map(([x]) => (
                <rect key={x} x={Math.round(x)} y={top} width="1" height="760" fill={gridColor} />
            ))}
            {[...cfg.prices, ...cfg.volLabels].map(([y, label]) => (
                <rect key={label} x={cfg.x} y={Math.round(y)} width={cfg.axis - cfg.x} height="1.4" fill={gridColor} />
            ))}

            {cfg.vols.map((t, i) => {
                const tone = cfg.volFlip[i] || cfg.candles[i].c;
                const cx = cfg.x0 + i * cfg.step;
                const y = 640 + t / 3;
                return (
                    <rect key={i} x={Math.round(cx - cfg.barW / 2)} y={y} width={cfg.barW} height={cfg.volBase - y}
                        fill={tone === 'r' ? PALE_RED : PALE_GREEN} shapeRendering="crispEdges" />
                );
            })}

            {cfg.candles.map((k, i) => {
                const cx = cfg.x0 + i * cfg.step;
                const color = k.c === 'r' ? RED : GREEN;
                const h = Math.max(k.b - k.t, 1);
                return (
                    <g key={i} fill={color} shapeRendering="crispEdges">
                        <rect x={Math.round(cx)} y={k.wt} width="1" height={k.wb - k.wt} />
                        <rect x={Math.round(cx - cfg.bodyW / 2)} y={k.t} width={cfg.bodyW} height={h} />
                    </g>
                );
            })}

            {cfg.lines.map(([points, color], i) => (
                <polyline key={i} points={points} fill="none" stroke={color} strokeWidth="1.400" strokeLinejoin="round" />
            ))}

            <line x1={cfg.x} x2={cfg.axis} y1={cfg.last.y} y2={cfg.last.y} stroke={cfg.last.color} strokeWidth="1" strokeDasharray="1 2" />
            {cfg.levels.map((y) => (
                <rect key={y} x={cfg.x} y={y - 1} width={cfg.axis - cfg.x} height="1.600" fill="#000" />
            ))}

            <rect x={cfg.axis} y={top} width={right - cfg.axis} height="760" fill="#fff" />
            {cfg.prices.map(([y, label]) => (
                <g key={label}>
                    <rect x={cfg.axis} y={Math.round(y)} width="4" height="1" fill="#50535e" />
                    <AxisText x={cfg.axis + 10} y={y + 5}>{label}</AxisText>
                </g>
            ))}
            {cfg.volLabels.map(([y, label]) => (
                <g key={label}>
                    <rect x={cfg.axis} y={Math.round(y)} width="4" height="1" fill="#50535e" />
                    <AxisText x={cfg.axis + 10} y={y + 5}>{label}</AxisText>
                </g>
            ))}

            <rect x={cfg.axis} y={cfg.last.tagTop} width="56" height="19" fill={cfg.last.color} />
            <TagText x={cfg.axis + 10} y={cfg.last.tagTop + 14.5}>39.39</TagText>
            {cfg.tags.map(([y, label]) => (
                <g key={label}>
                    <rect x={cfg.axis} y={y - 10} width="56" height="20" fill="#000" />
                    <TagText x={cfg.axis + 10} y={y + 5}>{label}</TagText>
                </g>
            ))}

            <rect x={cfg.x} y="643" width={cfg.w} height="1.300" fill="#50535e" />
            <rect x={cfg.x} y="897" width={cfg.w} height="1.300" fill="#50535e" />
            <rect x={cfg.axis} y={top} width="1.300" height="792" fill="#50535e" />
            {cfg.times.map(([x, label, strong]) => (
                <g key={label}>
                    <rect x={Math.round(x)} y="897" width="1" height="5" fill="#50535e" />
                    <TimeText x={x} y="921" $strong={strong}>{label}</TimeText>
                </g>
            ))}
        </ChartSvg>
    );
}

function ChartLegend({ left, title, ohlc, color, rows, muted }) {
    return (
        <Legend $left={left} $top={3}>
            <TitleRow>
                <Title>{title}</Title>
                <HidePill />
                {ohlc.map(([k, v]) => (
                    <Ohlc key={k} $color={color}>{k}<b>{v}</b></Ohlc>
                ))}
            </TitleRow>
            <ValuesRow>
                <PriceBox $color="#dd5d5a">39.39</PriceBox>
                <Spread>0.00</Spread>
                <PriceBox $color="#3b93c4">39.39</PriceBox>
            </ValuesRow>
            {rows.map(([label, value, c]) => (
                <LegendRow key={label} $muted={muted}>
                    {label}
                    {value && <LegendValue $color={c}>{value}</LegendValue>}
                    {muted && <EyeOff><EyeSlash /></EyeOff>}
                </LegendRow>
            ))}
            <CollapseBtn><ChevronUp size={16} strokeWidth={2} /></CollapseBtn>
        </Legend>
    );
}

function VolLegend({ left, rows }) {
    return (
        <Legend $left={left} $top={510}>
            {rows.map(([label, values]) => (
                <LegendRow key={label}>
                    {label}
                    {values.map(([v, c]) => <LegendValue key={v} $color={c}>{v}</LegendValue>)}
                </LegendRow>
            ))}
            <CollapseBtn><ChevronUp size={16} strokeWidth={2} /></CollapseBtn>
        </Legend>
    );
}

const leftRailGroups = [
    [<ToolDot key="d" />, <Trend key="a" />, <FibLines key="b" />, <Brush key="c" />, <TextTool key="e" />, <Pattern key="f" />, <Measure key="g" />, <FaSyncAlt key="h" size={23} />],
    [<Ruler key="a" />, <ZoomTool key="b" />],
    [
        <RailToggle key="a"><Magnet /></RailToggle>, <RailToggle key="b"><PencilLock /></RailToggle>,
        <Unlock key="c" />, <Eye key="d" />, <RailToggle key="e"><LinkIcon size={24} strokeWidth={1.4} /></RailToggle>,
    ],
    [<Trash key="a" />],
];

export default function App() {
    return (
        <Page>
            <GlobalStyle />
            <TabStrip>
                <Tab $w={301} $pad={14} $pr={12} $gap={12} $on>
                    <TvFavicon />
                    <TabTitle>300673 39.39 ▼ −2.04% 观物取象的想法</TabTitle>
                    <X size={17} strokeWidth={1.3} color="#555" />
                </Tab>
                <Tab $w={296} $pad={13} $pr={9} $gap={14}>
                    <YtFavicon />
                    <TabTitle>3 Step Process To Finding The Best Stocks</TabTitle>
                    <X size={17} strokeWidth={1.3} color="#555" />
                </Tab>
                <NewTab><Plus size={24} strokeWidth={1.2} /></NewTab>
                <WindowControls>
                    <svg width="14" height="2"><rect width="14" height="1" fill="#9a9a9a" /></svg>
                    <svg width="14" height="16" fill="none" stroke="#9a9a9a"><path d="M.5 3.500h10v12H.5zM3.500 3V.5h10v12h-3" /></svg>
                    <X size={19} strokeWidth={1} />
                </WindowControls>
            </TabStrip>

            <AddressRow>
                <NavButton><ArrowLeft size={25} strokeWidth={1.3} /></NavButton>
                <NavButton $color="#c4c4c4"><ArrowRight size={25} strokeWidth={1.3} /></NavButton>
                <NavButton><RotateCw size={24} strokeWidth={1.3} /></NavButton>
                <NavButton><Home size={24} strokeWidth={1.3} /></NavButton>
                <AddressBar>
                    <Lock size={22} strokeWidth={1.2} />
                    <Url>https://cn.tradingview.com/chart/IPhsJ7FF/</Url>
                    <Star size={20} strokeWidth={1.2} />
                </AddressBar>
                <ExtRow>
                    <Ext><Evernote /></Ext>
                    <Ext><Grammarly /></Ext>
                    <VRule />
                    <Ext $w={71}><FavList /></Ext>
                    <Ext $w={41}><Collections /></Ext>
                    <Ext $w={72}><Avatar /></Ext>
                    <Ext $w={42}><MoreHorizontal size={20} strokeWidth={1.4} /></Ext>
                </ExtRow>
            </AddressRow>

            <Workspace>
                <LeftRail>
                    <RailHead>
                        <Svg width="26" height="20" viewBox="0 0 26 20" $sw={0}>
                            <rect y="0" width="25" height="3" rx="1" fill="currentColor" />
                            <rect y="8" width="25" height="3" rx="1" fill="currentColor" />
                            <rect y="16" width="25" height="3" rx="1" fill="currentColor" />
                        </Svg>
                    </RailHead>
                    {leftRailGroups.map((group, g) => (
                        <RailGroup key={g} $last={g === leftRailGroups.length - 1}>
                            {group.map((icon, i) => <RailItem key={i}>{icon}</RailItem>)}
                        </RailGroup>
                    ))}
                </LeftRail>

                <Center>
                    <TopBar>
                        <Seg $w={125} $start $pad={16}><Symbol>300673</Symbol></Seg>
                        <Seg $w={85} $gap={0} $start $pad={12}>
                            <Interval $on>D</Interval><Interval>M</Interval><Caret size={16} strokeWidth={1.4} />
                        </Seg>
                        <Seg $w={48}><CandleIc /></Seg>
                        <Seg $w={93}><PlusCircle />对比</Seg>
                        <Seg $w={117} $start $pad={12} $gap={9}><Fx>f<small>x</small></Fx>指标<Caret size={16} strokeWidth={1.4} $m={7} /></Seg>
                        <Seg $w={128}><BarsIc />财务指标</Seg>
                        <Seg $w={92}><TemplateIc />模板</Seg>
                        <Seg $w={93}><AlarmPlus />警报</Seg>
                        <Seg $w={91} $gap={9}><ChevronsLeft size={26} strokeWidth={1.2} />回放</Seg>
                        <Seg $w={81} $gap={14}><Undo2 size={20} strokeWidth={1.4} /><Redo2 size={20} strokeWidth={1.4} color="#b2b5be" /></Seg>
                        <Seg $w={367} />
                        <Seg $w={48}><SplitIc /></Seg>
                        <Seg $w={147} $gap={3}><CloudIc />观物取象<Caret size={16} strokeWidth={1.4} $m={9} /></Seg>
                        <Seg $w={49}><Settings size={27} strokeWidth={1.2} /></Seg>
                        <Seg $w={49}><FullIc /></Seg>
                        <Seg $w={48} $plain><CameraIc /></Seg>
                        <Seg $w={78} $bg="#2196f3" $color="#fff" $size={20}>发表</Seg>
                        <Seg $w={49} $bg="#2196f3" $color="#fff" $plain><PlayCircle /></Seg>
                    </TopBar>

                    <Charts>
                        <Pane $w={893} $active>
                            <ChartDrawing cfg={leftChart} />
                            <ChartLegend
                                left={11}
                                title="佩蒂股份 · 1D · SZSE"
                                color={RED}
                                ohlc={[['开=', '39.28'], ['高=', '39.88'], ['低=', '38.66'], ['收=', '39.39'], ['', '-0.82 (-2.04%)']]}
                                rows={[['MA 50 close 0', '40.78', '#3b93c4'], ['MA 200 close 0', '31.44', '#e8912f']]}
                            />
                            <VolLegend
                                left={11}
                                rows={[
                                    ['Vol 5', [['2.282M', '#28a292'], ['2.315M', '#3b93c4']]],
                                    ['Vol 20', [['2.465M', '#e6a33c']]],
                                ]}
                            />
                            <CnyBox $left={844}>CNY</CnyBox>
                            <AxisGear $left={852}><Settings size={22} strokeWidth={1.3} /></AxisGear>
                        </Pane>
                        <Pane $w={895}>
                            <ChartDrawing cfg={rightChart} />
                            <ChartLegend
                                left={12}
                                title="佩蒂股份 · 1W · SZSE"
                                color={GREEN}
                                muted
                                ohlc={[['开=', '41.83'], ['高=', '42.44'], ['低=', '38.66'], ['收=', '39.39'], ['', '−1.71 (−4.16%)']]}
                                rows={[['MA · 1W 10 close 0'], ['MA · 1W 40 close 0']]}
                            />
                            <VolLegend
                                left={12}
                                rows={[
                                    ['Vol 5', [['11.576M', '#28a292'], ['12.77M', '#3b93c4']]],
                                    ['Vol 20', [['14.541M', '#e6a33c']]],
                                ]}
                            />
                            <CnyBox $left={848}>CNY</CnyBox>
                            <AxisGear $left={854}><Settings size={22} strokeWidth={1.3} /></AxisGear>
                        </Pane>
                    </Charts>

                    <RangeBar>
                        {['1天', '5天', '1个月', '3个月', '6个月', 'YTD', '1年', '5年', '全部'].map((r) => <span key={r}>{r}</span>)}
                        <RangeSep />
                        <Ic s={26}><path d="M6 8V4h16v21H8M6 11h16M11 2v4M17 2v4M3 21h9M9 18l3 3-3 3" /></Ic>
                    </RangeBar>

                    <BottomBar>
                        <BottomTab $w={138} $start>股票筛选器<ChevronDown size={14} strokeWidth={1.4} /></BottomTab>
                        <BottomTab $w={110}>文本笔记</BottomTab>
                        <BottomTab $w={127} $ls={-.4}>Pine编辑器</BottomTab>
                        <BottomTab $w={129}>策略测试器</BottomTab>
                        <BottomTab $w={111}>交易面板</BottomTab>
                        <BottomTools>
                            <ChevronUp size={28} strokeWidth={1.2} />
                            <Svg width="22" height="24" viewBox="0 0 22 24"><rect x="1" y="1" width="20" height="22" rx="3" /><path d="M1 6h20" /></Svg>
                        </BottomTools>
                    </BottomBar>
                </Center>

                <RightRail>
                    <RightItem><WatchIc /></RightItem>
                    <RightItem><AlarmIc /></RightItem>
                    <RightItem><NewsIc /></RightItem>
                    <RightItem><HotlistIc /></RightItem>
                    <RightItem><FlameIc /></RightItem>
                    <RightItem><CalendarIc /></RightItem>
                    <RightItem><BulbIc /></RightItem>
                    <RightSep $m="7.5px 0 7px" />
                    <RightItem><ChatPair /><Badge>1</Badge></RightItem>
                    <RightItem><ChatPair /></RightItem>
                    <RightItem><WaveBulb /></RightItem>
                    <RightItem><BellIc /></RightItem>
                    <RightSep $m="8px 0 6.5px" />
                    <RightItem><ZigZag /></RightItem>
                    <RightItem><DotsPills /></RightItem>
                    <RightItem $h={104}><DownChevrons /></RightItem>
                </RightRail>
            </Workspace>

            <Taskbar>
                <TaskIcon $w={60}><WinLogo /></TaskIcon>
                <TaskIcon $w={68}><ChromeLogo /></TaskIcon>
                <TaskIcon $w={55}><CalcLogo /></TaskIcon>
                <TaskIcon $w={70} $open><EdgeLogo /></TaskIcon>
                <Tray>
                    <TrayItem><ChevronUp size={20} strokeWidth={1.2} /></TrayItem>
                    <TrayItem><RecDot fill="#4cc2ea"><circle cx="12" cy="12" r="5" fill="#0d5f86" /></RecDot></TrayItem>
                    <TrayItem><RecDot fill="#d8433f"><path d="M12 6v12M6 12h12M8 8l8 8M16 8l-8 8" stroke="#fff" strokeWidth="1.300" /></RecDot></TrayItem>
                    <TrayItem><RecDot fill="#c0202c"><path d="M7 8h6M7 12h6M7 16h6M7 8v8M14 8l3 8 2-8" stroke="#fff" strokeWidth="1.300" fill="none" /></RecDot></TrayItem>
                    <TrayItem><Ic s={24}><path d="M9 7h14v14H9zM5 5v5M8 5v5M4 10h5v3H4zM6.500 13v8" /></Ic></TrayItem>
                    <TrayItem><Svg width="26" height="18" viewBox="0 0 26 18" $sw={0}><path fill="#cfd4d6" d="M6 17a5 5 0 0 1-.5-10A7 7 0 0 1 19 6a5.500 5.500 0 0 1 1 11z" /></Svg></TrayItem>
                    <TrayItem><Ic s={24}><path d="M4 10v8h4l6 5V5l-6 5zM17 9c2 3 2 7 0 10M20 6c3 4 3 12 0 16" /></Ic></TrayItem>
                    <TrayItem><Ic s={24}><path d="M4 14a16 16 0 0 1 20-6M7 18a11 11 0 0 1 12-5M10 22a6 6 0 0 1 5-4M20 13v11M23 13v11" /></Ic></TrayItem>
                    <TrayItem>A</TrayItem>
                    <TrayItem $m={6}><SogouLogo /></TrayItem>
                    <Clock>20:04<br />2020/9/6</Clock>
                    <Notify><Ic s={26}><path d="M3 3h22v15h-5l-1 5-6-5H3zM8 8h12M8 12h12M8 15h6" /></Ic></Notify>
                </Tray>
            </Taskbar>

            <Recorder>
                <RecSide>
                    <PauseBar /><PauseBar />
                    <Svg width="14" height="18" viewBox="0 0 14 18" $sw={1} $ml={-4}>
                        <path fill="#fff" stroke="#333" d="M1 1v13l3.500-3 2.500 5 2-1-2.500-5H11z" />
                    </Svg>
                    <RecStop />
                </RecSide>
                <RecTime>00:03:51<Grip /></RecTime>
                <RecTools>
                    <Ic s={26}><circle cx="14" cy="14" r="7" strokeWidth="2" /><path d="M3 8V3h5M20 3h5v5M25 20v5h-5M8 25H3v-5" stroke="#888" /></Ic>
                    <Ic s={26} sw={2}><path d="M11 3v8H3M17 3v8h8M11 25v-8H3M17 25v-8h8" /></Ic>
                    <Ic s={26} sw={1.6}><path d="M3 8h6l2-3h6l2 3h6v14H3z" fill="#fff" /><circle cx="14" cy="14" r="4" fill="#1b1b1d" /><path d="M3 26h22" stroke="#888" /></Ic>
                    <Ic s={26} sw={1.6}><path d="M4 24l2-6L20 3l5 4-15 14z" fill="#fff" /><path d="M12 26h13" stroke="#888" /></Ic>
                    <Ic s={26} sw={1.6}><rect x="9" y="2" width="15" height="18" rx="2" fill="#1b1b1d" strokeWidth="2.400" /><path d="M7 12H4v13h10v-2" stroke="#888" /></Ic>
                </RecTools>
            </Recorder>
        </Page>
    );
}
